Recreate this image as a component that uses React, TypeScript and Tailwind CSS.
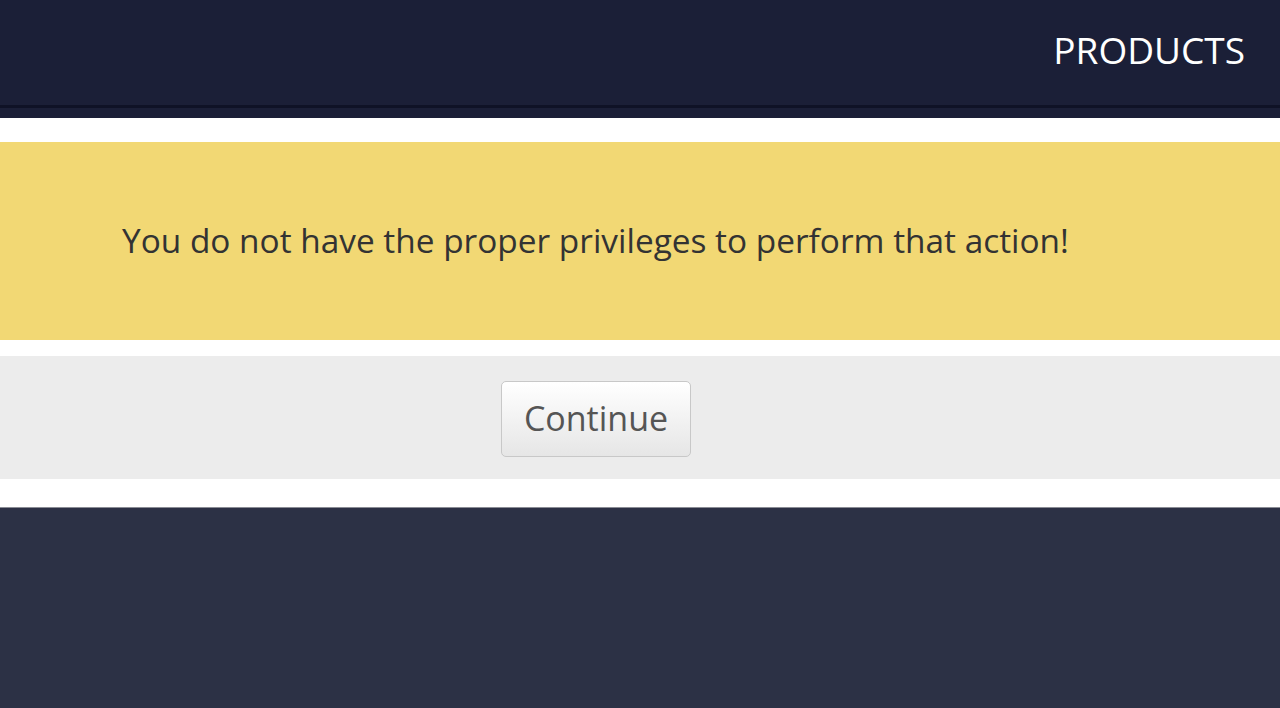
export default function App() {
  return (
    <div className="min-h-[708px] bg-[#2c3145] font-['Open_Sans',sans-serif]">
      <div className="bg-[#1b1f37]">
        <div className="flex h-[105px] items-center justify-end pr-[35px] pb-[6px]">
          <span className="text-[37px] leading-[1.5] text-white">PRODUCTS</span>
        </div>
        <div className="h-[3px] bg-[#0f1226]" />
        <div className="h-[10px]" />
      </div>
      <div className="bg-white pt-[24px] pb-[28px] border-b border-[#8a8c94]">
        <div className="flex h-[198px] items-center bg-[#f2d874] pl-[122px] pb-[2px]">
          <p className="text-[33.4px] leading-[1.5] text-[#333333]">You do not have the proper privileges to perform that action!</p>
        </div>
        <div className="mt-[16px] flex h-[123px] items-start bg-[#ececec] pl-[501px] pt-[25px]">
          <button className="h-[76px] w-[190px] rounded-[5px] border border-[#c8c8c8] bg-gradient-to-b from-white to-[#e6e6e6] pb-[1px] text-[34px] leading-[1.5] text-[#555555]">
            Continue
          </button>
        </div>
      </div>
      <div className="h-[200px]" />
    </div>
  );
}
